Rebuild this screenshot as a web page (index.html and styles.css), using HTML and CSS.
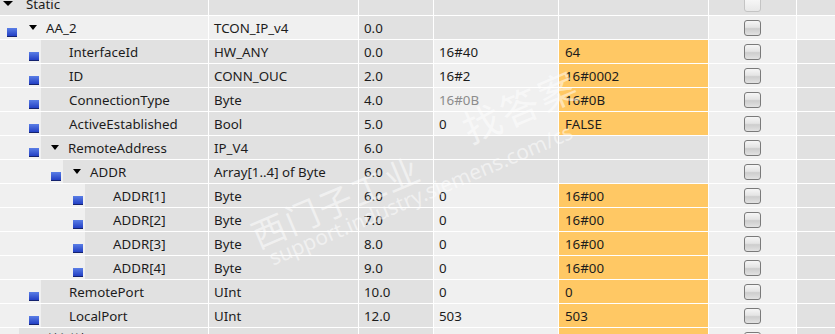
FILE: index.html
```html
<!DOCTYPE html>
<html lang="en">
<head>
  <meta charset="UTF-8" />
  <title>DB - AA_2</title>
  <link rel="stylesheet" href="styles.css">
</head>
<body>

  <div class="table">

    <div class="row">
      <div class="cell name top"><span class="caret"></span><span>Static</span></div>
      <div class="cell"></div>
      <div class="cell"></div>
      <div class="cell"></div>
      <div class="cell"></div>
      <div class="cell chk"><span class="box off"></span></div>
      <div class="cell"></div>
    </div>

    <div class="row">
      <div class="cell name l0"><span class="indent"><i class="sq"></i></span><span class="label edit"><span class="caret"></span>AA_2</span></div>
      <div class="cell light">TCON_IP_v4</div>
      <div class="cell">0.0</div>
      <div class="cell"></div>
      <div class="cell"></div>
      <div class="cell chk light"><span class="box"></span></div>
      <div class="cell light"></div>
    </div>

    <div class="row">
      <div class="cell name l1"><span class="indent"><i class="sq"></i></span><span class="label leaf">InterfaceId</span></div>
      <div class="cell">HW_ANY</div>
      <div class="cell">0.0</div>
      <div class="cell light">16#40</div>
      <div class="cell monitor">64</div>
      <div class="cell chk light"><span class="box"></span></div>
      <div class="cell"></div>
    </div>

    <div class="row">
      <div class="cell name l1"><span class="indent"><i class="sq"></i></span><span class="label leaf">ID</span></div>
      <div class="cell">CONN_OUC</div>
      <div class="cell">2.0</div>
      <div class="cell light">16#2</div>
      <div class="cell monitor">16#0002</div>
      <div class="cell chk light"><span class="box"></span></div>
      <div class="cell"></div>
    </div>

    <div class="row">
      <div class="cell name l1"><span class="indent"><i class="sq"></i></span><span class="label leaf">ConnectionType</span></div>
      <div class="cell">Byte</div>
      <div class="cell">4.0</div>
      <div class="cell light dim">16#0B</div>
      <div class="cell monitor">16#0B</div>
      <div class="cell chk light"><span class="box"></span></div>
      <div class="cell"></div>
    </div>

    <div class="row">
      <div class="cell name l1"><span class="indent"><i class="sq"></i></span><span class="label leaf">ActiveEstablished</span></div>
      <div class="cell">Bool</div>
      <div class="cell">5.0</div>
      <div class="cell light">0</div>
      <div class="cell monitor">FALSE</div>
      <div class="cell chk light"><span class="box"></span></div>
      <div class="cell"></div>
    </div>

    <div class="row">
      <div class="cell name l1"><span class="indent"><i class="sq"></i></span><span class="label"><span class="caret"></span>RemoteAddress</span></div>
      <div class="cell">IP_V4</div>
      <div class="cell">6.0</div>
      <div class="cell"></div>
      <div class="cell"></div>
      <div class="cell chk light"><span class="box"></span></div>
      <div class="cell"></div>
    </div>

    <div class="row">
      <div class="cell name l2"><span class="indent"><i class="sq"></i></span><span class="label"><span class="caret"></span>ADDR</span></div>
      <div class="cell">Array[1..4] of Byte</div>
      <div class="cell">6.0</div>
      <div class="cell"></div>
      <div class="cell"></div>
      <div class="cell chk light"><span class="box"></span></div>
      <div class="cell"></div>
    </div>

    <div class="row">
      <div class="cell name l3"><span class="indent"><i class="sq"></i></span><span class="label leaf">ADDR[1]</span></div>
      <div class="cell">Byte</div>
      <div class="cell">6.0</div>
      <div class="cell light">0</div>
      <div class="cell monitor">16#00</div>
      <div class="cell chk light"><span class="box"></span></div>
      <div class="cell"></div>
    </div>

    <div class="row">
      <div class="cell name l3"><span class="indent"><i class="sq"></i></span><span class="label leaf">ADDR[2]</span></div>
      <div class="cell">Byte</div>
      <div class="cell">7.0</div>
      <div class="cell light">0</div>
      <div class="cell monitor">16#00</div>
      <div class="cell chk light"><span class="box"></span></div>
      <div class="cell"></div>
    </div>

    <div class="row">
      <div class="cell name l3"><span class="indent"><i class="sq"></i></span><span class="label leaf">ADDR[3]</span></div>
      <div class="cell">Byte</div>
      <div class="cell">8.0</div>
      <div class="cell light">0</div>
      <div class="cell monitor">16#00</div>
      <div class="cell chk light"><span class="box"></span></div>
      <div class="cell"></div>
    </div>

    <div class="row">
      <div class="cell name l3"><span class="indent"><i class="sq"></i></span><span class="label leaf">ADDR[4]</span></div>
      <div class="cell">Byte</div>
      <div class="cell">9.0</div>
      <div class="cell light">0</div>
      <div class="cell monitor">16#00</div>
      <div class="cell chk light"><span class="box"></span></div>
      <div class="cell"></div>
    </div>

    <div class="row">
      <div class="cell name l1"><span class="indent"><i class="sq"></i></span><span class="label leaf">RemotePort</span></div>
      <div class="cell">UInt</div>
      <div class="cell">10.0</div>
      <div class="cell light">0</div>
      <div class="cell monitor">0</div>
      <div class="cell chk light"><span class="box"></span></div>
      <div class="cell"></div>
    </div>

    <div class="row">
      <div class="cell name l1"><span class="indent"><i class="sq"></i></span><span class="label leaf">LocalPort</span></div>
      <div class="cell">UInt</div>
      <div class="cell">12.0</div>
      <div class="cell light">503</div>
      <div class="cell monitor">503</div>
      <div class="cell chk light"><span class="box"></span></div>
      <div class="cell"></div>
    </div>

    <div class="row">
      <div class="cell name l0"><span class="indent"></span><span class="label leaf">检测结果</span></div>
      <div class="cell">Bool</div>
      <div class="cell">14.0</div>
      <div class="cell light">false</div>
      <div class="cell monitor">FALSE</div>
      <div class="cell chk light"><span class="box"></span></div>
      <div class="cell"></div>
    </div>

  </div>

  <!-- forum watermark over the screenshot -->
  <div class="watermark">
    <div class="wm-line">
      <span class="wm-cn">西门子工业</span>
      <span class="wm-find">找答案</span>
    </div>
    <div class="wm-url">support.industry.siemens.com/cs</div>
  </div>

</body>
</html>
```

FILE: styles.css
```css
body {
  margin: 0;
  background: #ffffff;
  font-family: "Noto Sans", "Noto Sans CJK SC", sans-serif;
  font-size: 13.3px;
  color: #1c1c1c;
  overflow: hidden;
  position: relative;
  height: 334px;
}

.table {
  margin-top: -8px;
}

.row {
  display: grid;
  grid-template-columns: 208px 149px 74px 124px 149px 87px 1fr;
  column-gap: 1px;
  margin-bottom: 1px;
  height: 23px;
}

.cell {
  background: #e1e1e1;
  padding-left: 5px;
  display: flex;
  align-items: center;
  white-space: nowrap;
  overflow: hidden;
}

.cell.light {
  background: #f0f0f0;
}

.cell.monitor {
  background: #ffc864;
  padding-left: 6px;
}

.cell.dim {
  color: #8c8c8c;
}

/* name column with tree indent */
.name {
  padding-left: 0;
  background: #f0f0f0;
  align-items: stretch;
}

.name.top {
  background: #e1e1e1;
  padding-left: 3px;
  align-items: center;
}

.name.top .caret {
  margin: 0 13px 0 0;
  border-left-width: 5px;
  border-right-width: 5px;
}

.indent {
  display: flex;
  justify-content: flex-end;
  align-items: flex-end;
  flex-shrink: 0;
}

.l0 .indent { width: 19px; }
.l1 .indent { width: 41px; }
.l2 .indent { width: 63px; }
.l3 .indent { width: 85px; }

.sq {
  display: block;
  width: 10px;
  height: 8px;
  margin: 0 2px 2px 0;
  background: linear-gradient(#5a7ee6, #2340c4);
  border-bottom: 1px solid #15236e;
}

.label {
  flex: 1;
  background: #e1e1e1;
  display: flex;
  align-items: center;
  padding-left: 10px;
}

.label.leaf {
  padding-left: 28px;
}

.label.edit {
  background: #f0f0f0;
}

.caret {
  width: 0;
  height: 0;
  border-left: 4.5px solid transparent;
  border-right: 4.5px solid transparent;
  border-top: 5px solid #000000;
  margin-right: 9px;
}

/* checkbox column */
.chk {
  justify-content: center;
  padding-left: 0;
}

.box {
  width: 15px;
  height: 14px;
  border: 1.5px solid #7a7a7a;
  border-radius: 3px;
  background: linear-gradient(#f6f6f6 0%, #e4e4e4 45%, #cdcdcd 55%, #e2e2e2 100%);
}

.box.off {
  border-color: #c4c4c4;
  background: linear-gradient(#fafafa, #e8e8e8);
}

/* watermark */
.watermark {
  position: absolute;
  left: 240px;
  top: 206px;
  transform: rotate(-23deg);
  transform-origin: left top;
  color: rgba(255, 255, 255, 0.5);
  pointer-events: none;
  white-space: nowrap;
}

.wm-line {
  display: flex;
  align-items: flex-end;
  line-height: 36px;
}

.wm-cn {
  font-size: 34px;
  letter-spacing: 2px;
}

.wm-find {
  font-size: 38px;
  margin-left: 56px;
  margin-bottom: 16px;
  letter-spacing: 3px;
}

.wm-url {
  font-size: 21px;
  line-height: 25px;
  padding-left: 7px;
  margin-top: -4px;
}
```
